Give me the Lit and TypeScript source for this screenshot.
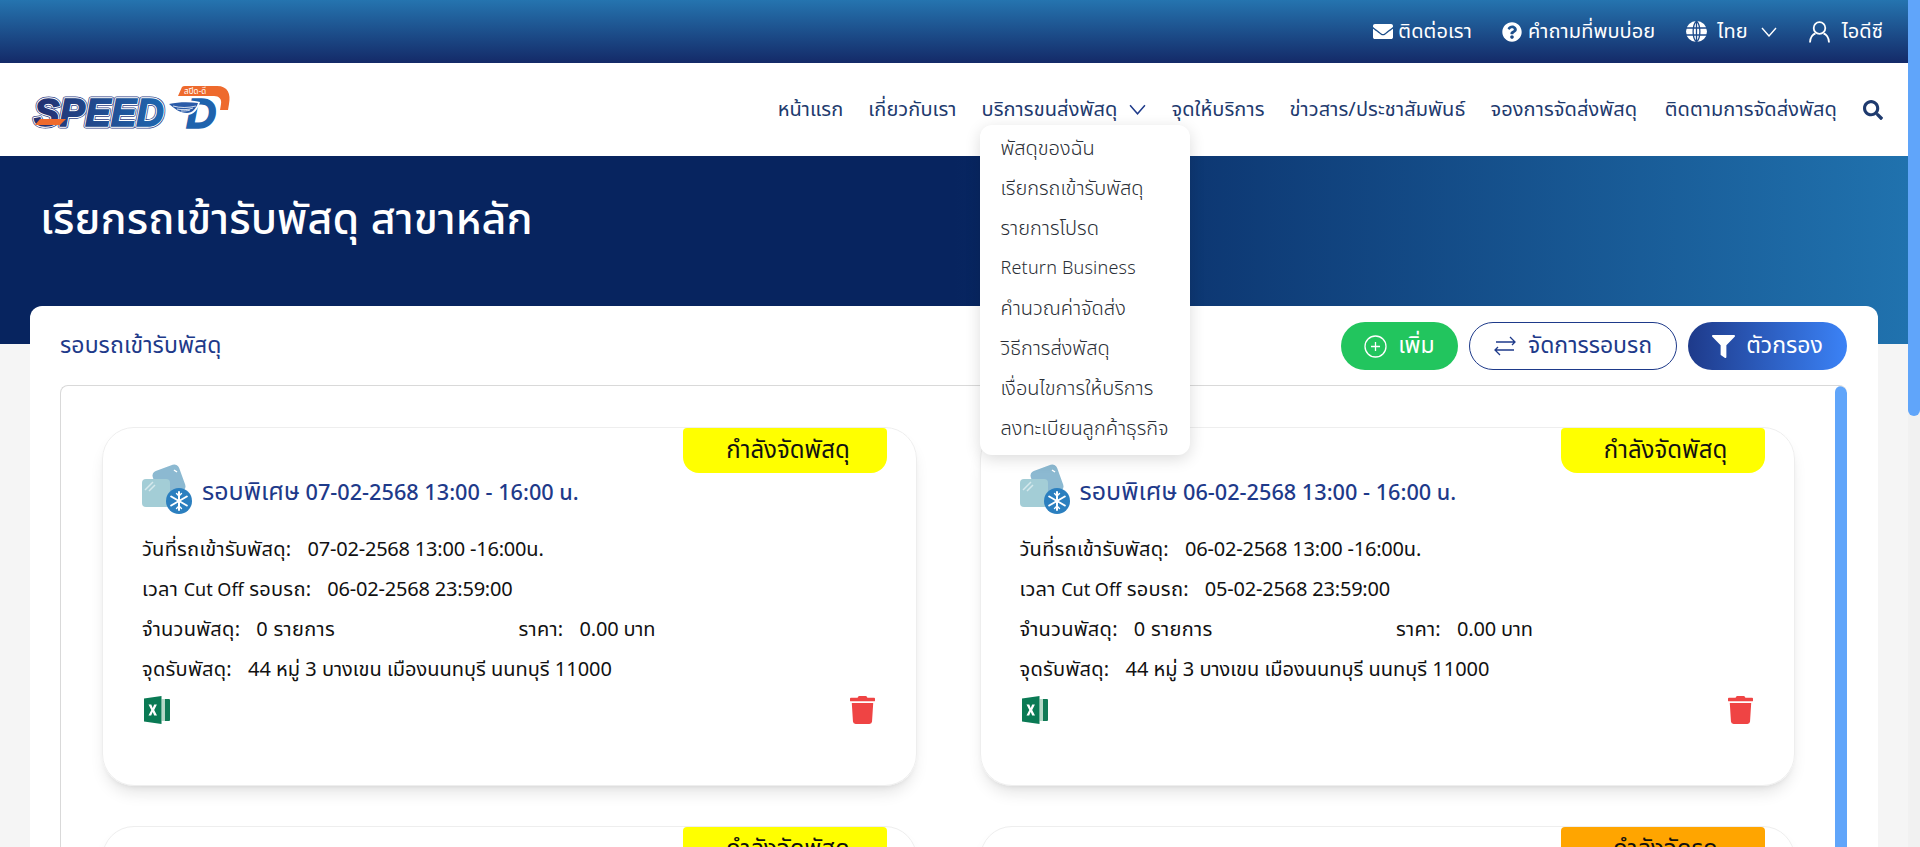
import { LitElement, html, css, svg } from "lit";
import { customElement } from "lit/decorators.js";

const NAV = ["หน้าแรก", "เกี่ยวกับเรา", "บริการขนส่งพัสดุ", "จุดให้บริการ", "ข่าวสาร/ประชาสัมพันธ์", "จองการจัดส่งพัสดุ", "ติดตามการจัดส่งพัสดุ"];
const MENU = ["พัสดุของฉัน", "เรียกรถเข้ารับพัสดุ", "รายการโปรด", "Return Business", "คำนวณค่าจัดส่ง", "วิธีการส่งพัสดุ", "เงื่อนไขการให้บริการ", "ลงทะเบียนลูกค้าธุรกิจ"];

const ROUNDS = [
  { date: "07-02-2568", cutoff: "06-02-2568", status: "กำลังจัดพัสดุ", orange: false },
  { date: "06-02-2568", cutoff: "05-02-2568", status: "กำลังจัดพัสดุ", orange: false },
  { date: "05-02-2568", cutoff: "04-02-2568", status: "กำลังจัดพัสดุ", orange: false },
  { date: "04-02-2568", cutoff: "03-02-2568", status: "กำลังจัดรถ", orange: true },
];

const chevron = svg`<svg class="chev" viewBox="0 0 16 10" fill="none" stroke="currentColor" stroke-width="1.4"><path d="M1 1l7 8 7-8"/></svg>`;

const iceIcon = svg`<svg width="50" height="51" viewBox="0 0 50 51">
  <rect x="13" y="4" width="28" height="28" rx="5" fill="#8cb9d1" transform="rotate(-20 27 18)"/>
  <path d="M32 7l3 2" stroke="#fff" stroke-width="1.5"/>
  <rect x="0" y="16" width="28" height="28" rx="4" fill="#a3cdd6"/>
  <path d="M3 27l8-8M7 28l6-6" stroke="#d5e9ec" stroke-width="1.5"/>
  <circle cx="37" cy="38" r="13" fill="#2b7fbf"/>
  <g stroke="#fff" stroke-width="2" stroke-linecap="round">
    <path d="M37 29v18M29.200 33.500l15.600 9M29.200 42.500l15.600-9"/>
    <path d="M34.500 30.500l2.500 2.500 2.500-2.500M34.500 45.500l2.500-2.500 2.500 2.500" fill="none" stroke-width="1.4"/>
  </g>
</svg>`;

const excelIcon = svg`<svg class="xls" width="26" height="28" viewBox="0 0 26 28">
  <path d="M17.500 3H21v22h-3.500z" fill="#b5d8c7"/>
  <path d="M21 3h4a1 1 0 0 1 1 1v20a1 1 0 0 1-1 1h-4z" fill="#0f7a55"/>
  <path d="M0 2.500L17.500 0v28L0 25.500z" fill="#0a7a54"/>
  <path d="M4.500 8.500h2.800L8.700 12l1.500-3.500h2.700l-2.700 5.500 2.800 5.500h-2.800L8.700 16l-1.500 3.500H4.500L7.300 14z" fill="#fff"/>
</svg>`;

const trashIcon = svg`<svg width="25" height="28" viewBox="0 0 448 512" fill="#ef4444" preserveAspectRatio="none"><path d="M432 32H312l-9.400-18.700A24 24 0 0 0 281.100 0H166.800a23.700 23.700 0 0 0-21.400 13.300L136 32H16A16 16 0 0 0 0 48v32a16 16 0 0 0 16 16h416a16 16 0 0 0 16-16V48a16 16 0 0 0-16-16zM53.200 467a48 48 0 0 0 47.900 45h245.800a48 48 0 0 0 47.900-45L416 128H32z"/></svg>`;

@customElement("app-root")
export class AppRoot extends LitElement {
  static styles = css`
    :host {
      display: block;
      height: 847px;
      overflow: hidden;
      font-family: "Noto Sans Thai", "Noto Sans", "DejaVu Sans", sans-serif;
      color: #111;
    }
    * { box-sizing: border-box; }

    .shell { display: flex; height: 847px; background: #f5f5f5; }
    .page { flex: 1; min-width: 0; display: flex; flex-direction: column; position: relative; }
    .page-bar { width: 12px; background: #f1f1f1; flex: none; }
    .page-bar div { height: 416px; background: #60a5fa; border-radius: 0 0 6px 6px; }

    .top {
      height: 63px;
      flex: none;
      background: linear-gradient(180deg, #2574af 0%, #142a68 100%);
      color: #fff;
      display: flex;
      justify-content: flex-end;
      align-items: center;
      gap: 30px;
      padding-right: 25px;
      font-size: 20px;
      letter-spacing: 0.1px;
    }
    .top-item { display: flex; align-items: center; gap: 6px; }
    .top-item svg { display: block; fill: currentColor; }
    .mail { gap: 5px; }
    .lang { gap: 10px; margin-left: 1px; }
    .lang .chev { width: 16px; height: 10px; fill: none; margin-left: 3px; }
    .user { gap: 12px; margin-left: 2px; }

    .nav {
      height: 93px;
      flex: none;
      background: #fff;
      display: flex;
      align-items: center;
      padding: 0 25px 0 32px;
      color: #1e3a6e;
      font-size: 20px;
      letter-spacing: 0.1px;
    }
    .logo { margin-right: auto; display: block; overflow: visible; }
    .links { display: flex; align-items: center; gap: 25px; }
    .link { display: flex; align-items: center; gap: 12px; position: relative; white-space: nowrap; line-height: 28px; }
    .link:nth-child(6) { margin-right: 2.4px; }
    .link .chev { width: 17px; height: 11px; color: #1e3a8a; }
    .search { display: block; fill: #1e3a6e; margin-left: 1px; }

    .menu {
      position: absolute;
      left: -1px;
      top: 29px;
      width: 210px;
      height: 330px;
      z-index: 5;
      background: #fff;
      border-radius: 12px;
      box-shadow: 0 4px 16px rgba(0, 0, 0, 0.14);
      padding: 4px 20px;
      color: #2b2f36;
      font-weight: 300;
      letter-spacing: 0;
    }
    .menu div { height: 40px; display: flex; align-items: center; }
    .menu .latin { font-size: 18px; letter-spacing: 0.2px; }

    .hero {
      height: 188px;
      flex: none;
      background: linear-gradient(90deg, #07245f 0%, #07245f 50%, #2072ae 100%);
      color: #fff;
      padding: 30px 0 0 40px;
      font-size: 43px;
      font-weight: 500;
      line-height: 70px;
      letter-spacing: 0.1px;
    }

    .panel {
      flex: 1;
      min-height: 0;
      margin: -38px 30px 0 30px;
      background: #fff;
      border-radius: 12px 12px 0 0;
      padding: 16px 31px 0 30px;
      display: flex;
      flex-direction: column;
    }
    .panel-head { height: 63px; flex: none; display: flex; align-items: flex-start; justify-content: space-between; }
    .panel-title { font-size: 23px; color: #1e3a8a; line-height: 48px; letter-spacing: 0.1px; }
    .actions { display: flex; gap: 11px; }
    .btn {
      height: 48px;
      border-radius: 24px;
      display: flex;
      align-items: center;
      justify-content: center;
      gap: 11px;
      font-size: 23px;
    }
    .btn svg { display: block; }
    .add { width: 117px; background: #22c55e; color: #fff; }
    .manage { width: 208px; background: #fff; color: #1e3a8a; border: 1px solid #1e3a8a; gap: 12px; }
    .filter { width: 159px; background: linear-gradient(90deg, #1e3a8a, #3b82f6); color: #fff; }

    .box {
      flex: 1;
      min-height: 0;
      border: 1px solid #d9d9d9;
      border-bottom: 0;
      border-right: 0;
      border-radius: 8px 8px 0 0;
      display: flex;
      overflow: hidden;
    }
    .grid {
      flex: 1;
      min-width: 0;
      display: grid;
      grid-template-columns: 815px 815px;
      column-gap: 62.5px;
      row-gap: 40px;
      padding: 41px 0 0 41px;
      align-content: start;
    }
    .box-bar { width: 12px; flex: none; background: #60a5fa; border-radius: 6px 6px 0 0; }

    .card {
      height: 359px;
      border: 1px solid #eeeeee;
      border-radius: 32px;
      box-shadow: 0 10px 15px -3px rgba(0, 0, 0, 0.1), 0 4px 6px -4px rgba(0, 0, 0, 0.1);
      padding: 35px 41px 0 39px;
      position: relative;
      font-size: 20px;
    }
    .badge {
      position: absolute;
      top: 0;
      right: 29px;
      width: 204px;
      height: 45px;
      background: #ff0;
      border-radius: 4px 4px 16px 16px;
      display: flex;
      align-items: center;
      justify-content: center;
      padding-left: 6px;
      font-size: 24px;
      color: #111;
    }
    .badge.orange { background: #ffa500; }
    .head { display: flex; align-items: center; gap: 10px; color: #1e3a8a; font-size: 21.7px; font-weight: 500; height: 51px; }
    .head svg { display: block; flex: none; }
    .head span { padding-top: 6px; }
    .head b { font-size: 25px; font-weight: 400; }
    .rows { display: flex; flex-direction: column; margin-top: 16px; }
    .row { height: 40px; display: flex; align-items: center; gap: 16px; color: #111; white-space: nowrap; }
    .row.split { display: grid; grid-template-columns: 1fr 1fr; gap: 20px; }
    .pair { display: flex; gap: 16px; }
    .label { letter-spacing: 0.27px; }
    .label i { font-style: normal; font-size: 18px; letter-spacing: 0; }
    .val { letter-spacing: -0.2px; }
    .val.wide { letter-spacing: 0.3px; }
    .tools { display: flex; justify-content: space-between; margin-top: 6px; }
    .tools svg { display: block; }
    .tools .xls { margin-left: 2px; }
  `;

  private renderLogo() {
    return svg`<svg class="logo" width="200" height="48" viewBox="0 0 200 48">
      <defs>
        <linearGradient id="lg" x1="0" x2="1" y1="0" y2="0">
          <stop offset="0" stop-color="#232f6f"/>
          <stop offset="1" stop-color="#1f67b0"/>
        </linearGradient>
      </defs>
      <text x="2" y="40" font-family="Liberation Sans" font-size="39" font-weight="700" font-style="italic" textLength="130" lengthAdjust="spacingAndGlyphs" fill="#fff" stroke="#2f3f86" stroke-width="5" stroke-linejoin="round">SPEED</text>
      <text x="2" y="40" font-family="Liberation Sans" font-size="39" font-weight="700" font-style="italic" textLength="130" lengthAdjust="spacingAndGlyphs" fill="#fff" stroke="#fff" stroke-width="3.500" stroke-linejoin="round">SPEED</text>
      <text x="2" y="40" font-family="Liberation Sans" font-size="39" font-weight="700" font-style="italic" textLength="130" lengthAdjust="spacingAndGlyphs" fill="url(#lg)" stroke="url(#lg)" stroke-width="1.500">SPEED</text>
      <path d="M3 39l5-6h26l-6 6z" fill="#ee6a2d"/>
      <path d="M146 10l4-9q1-1 3-1h32c11 0 14 8 12 18l-1 6h-8l1-6c1-5-2-8-7-8z" fill="#ee6a2d"/>
      <text x="152" y="8" font-size="8" fill="#fff">สปีด-ดี</text>
      <text x="154" y="42" font-family="Liberation Sans" font-size="42" font-weight="700" font-style="italic" fill="#1f63ad" stroke="#1f63ad" stroke-width="1.500">D</text>
      <path d="M135 17c10-3 22-3 33-1-2 7-6 13-13 13-8 0-14-6-20-12z" fill="#fff"/>
      <path d="M137 18c9-2 20-2 29-1-2 6-6 10-11 10-7 0-12-4-18-9z" fill="#2a5ba8"/>
      <path d="M141 20c7 2 15 2 23 0M145 23c5 1 11 1 16-1M149 25c3 0 6 0 9-1" stroke="#fff" stroke-width="0.800" fill="none"/>
    </svg>`;
  }

  private renderCard(r: (typeof ROUNDS)[number]) {
    return html`<div class="card">
      <div class="badge ${r.orange ? "orange" : ""}">${r.status}</div>
      <div class="head">${iceIcon}<span><b>รอบพิเศษ</b> ${r.date} 13:00 - 16:00 น.</span></div>
      <div class="rows">
        <div class="row"><span class="label">วันที่รถเข้ารับพัสดุ:</span><span class="val">${r.date} 13:00 -16:00น.</span></div>
        <div class="row"><span class="label">เวลา <i>Cut Off</i> รอบรถ:</span><span class="val">${r.cutoff} 23:59:00</span></div>
        <div class="row split">
          <div class="pair"><span class="label">จำนวนพัสดุ:</span><span class="val wide">0 รายการ</span></div>
          <div class="pair"><span class="label">ราคา:</span><span class="val">0.00 บาท</span></div>
        </div>
        <div class="row"><span class="label">จุดรับพัสดุ:</span><span>44 หมู่ 3 บางเขน เมืองนนทบุรี นนทบุรี 11000</span></div>
      </div>
      <div class="tools">${excelIcon}${trashIcon}</div>
    </div>`;
  }

  render() {
    return html`<div class="shell">
      <div class="page">
        <div class="top">
          <div class="top-item mail">
            <svg width="20" height="15" viewBox="0 0 512 384"><path d="M502.300 126.800c3.900-3.100 9.700-.2 9.700 4.700V336c0 26.500-21.500 48-48 48H48c-26.500 0-48-21.500-48-48V131.600c0-5 5.700-7.800 9.700-4.700 22.400 17.400 52.100 39.500 154.100 113.600 21.100 15.400 56.700 47.800 92.200 47.600 35.700.3 72-32.800 92.300-47.600 102-74.100 131.600-96.300 154-113.700zM256 256c23.200.4 56.600-29.200 73.400-41.400 132.700-96.300 142.800-104.700 173.400-128.700 5.800-4.500 9.200-11.500 9.200-18.900V48c0-26.500-21.500-48-48-48H48C21.500 0 0 21.500 0 48v19c0 7.400 3.400 14.300 9.200 18.900 30.600 23.900 40.700 32.400 173.400 128.700 16.800 12.200 50.200 41.800 73.400 41.400z"/></svg>
            <span>ติดต่อเรา</span>
          </div>
          <div class="top-item">
            <svg width="20" height="20" viewBox="0 0 512 512"><path d="M504 256c0 137-111 248-248 248S8 393 8 256 119 8 256 8s248 111 248 248zM262.700 90c-54.500 0-89.300 23-116.500 63.800-3.500 5.300-2.400 12.400 2.700 16.300l34.700 26.300c5.200 3.900 12.600 3 16.700-2.100 17.900-22.700 30.100-35.800 57.300-35.800 20.400 0 45.700 13.100 45.700 32.900 0 15-12.400 22.700-32.600 34-23.600 13.200-54.800 29.700-54.800 70.900V300c0 6.600 5.400 12 12 12h56c6.600 0 12-5.400 12-12v-1.300c0-28.600 83.400-29.800 83.400-107.200 0-58.300-60.500-102.500-117.200-102.500zM256 339.200c-25.400 0-46.100 20.700-46.100 46.100 0 25.400 20.700 46.100 46.100 46.100s46.100-20.700 46.100-46.100c0-25.400-20.700-46.100-46.100-46.100z"/></svg>
            <span>คำถามที่พบบ่อย</span>
          </div>
          <div class="top-item lang">
            <svg width="21" height="21" viewBox="0 0 21 21"><circle cx="10.500" cy="10.500" r="10.500"/><path d="M0 7h21M0 14h21M10.500 0v21M10.500 0C6 4 6 17 10.500 21M10.500 0C15 4 15 17 10.500 21" fill="none" stroke="#1d4a8a" stroke-width="1.300"/></svg>
            <span>ไทย</span>
            ${chevron}
          </div>
          <div class="top-item user">
            <svg width="21" height="22" viewBox="0 0 21 22" style="fill:none" stroke="currentColor" stroke-width="1.800"><circle cx="10.500" cy="7" r="5.800"/><path d="M1 21.500c0-5 3-8.500 5.500-9M20 21.500c0-5-3-8.500-5.500-9"/></svg>
            <span>ไอดีซี</span>
          </div>
        </div>

        <div class="nav">
          ${this.renderLogo()}
          <div class="links">
            ${NAV.map((n, i) =>
              i === 2
                ? html`<div class="link"><span>${n}</span>${chevron}
                    <div class="menu">
                      ${MENU.map((m) => html`<div class=${m.startsWith("Return") ? "latin" : ""}>${m}</div>`)}
                    </div>
                  </div>`
                : html`<div class="link">${n}</div>`
            )}
            <svg class="search" width="20" height="20" viewBox="0 0 512 512"><path d="M505 442.700L405.300 343c-4.500-4.500-10.600-7-17-7H372c27.600-35.300 44-79.700 44-128C416 93.100 322.900 0 208 0S0 93.100 0 208s93.100 208 208 208c48.300 0 92.700-16.400 128-44v16.300c0 6.400 2.500 12.500 7 17l99.700 99.700c9.400 9.400 24.600 9.400 33.900 0l28.300-28.300c9.400-9.400 9.400-24.600.1-34zM208 336c-70.700 0-128-57.200-128-128 0-70.700 57.200-128 128-128 70.700 0 128 57.200 128 128 0 70.700-57.200 128-128 128z"/></svg>
          </div>
        </div>

        <div class="hero">เรียกรถเข้ารับพัสดุ สาขาหลัก</div>

        <div class="panel">
          <div class="panel-head">
            <div class="panel-title">รอบรถเข้ารับพัสดุ</div>
            <div class="actions">
              <div class="btn add">
                <svg width="23" height="23" viewBox="0 0 23 23" fill="none" stroke="currentColor" stroke-width="1.300"><circle cx="11.500" cy="11.500" r="10.500"/><path d="M11.500 7v9M7 11.500h9"/></svg>
                <span>เพิ่ม</span>
              </div>
              <div class="btn manage">
                <svg width="22" height="20" viewBox="0 0 22 20" fill="none" stroke="currentColor" stroke-width="1.300"><path d="M2 6h19M16 1l5 5-3 3M20 14H1M6 19l-5-5 3-3"/></svg>
                <span>จัดการรอบรถ</span>
              </div>
              <div class="btn filter">
                <svg width="23" height="23" viewBox="0 0 512 512" fill="currentColor"><path d="M487.976 0H24.028C2.710 0-8.047 25.866 7.058 40.971L192 225.941V432c0 7.831 3.821 15.170 10.237 19.662l80 55.980C298.020 518.690 320 507.493 320 487.980V225.941l184.947-184.970C520.021 25.896 509.338 0 487.976 0z"/></svg>
                <span>ตัวกรอง</span>
              </div>
            </div>
          </div>
          <div class="box">
            <div class="grid">${ROUNDS.map((r) => this.renderCard(r))}</div>
            <div class="box-bar"></div>
          </div>
        </div>
      </div>
      <div class="page-bar"><div></div></div>
    </div>`;
  }
}
